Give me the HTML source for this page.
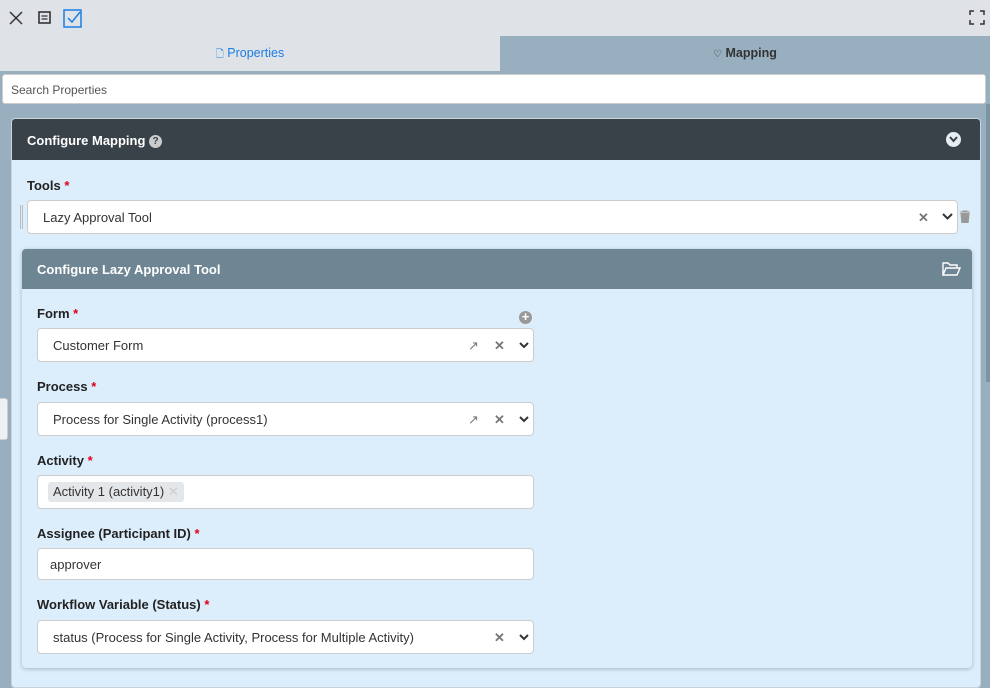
<!DOCTYPE html>
<html><head><style>
*{box-sizing:border-box;margin:0;padding:0}
body{width:990px;height:676px;overflow:hidden;background:#97afbf;font-family:"Liberation Sans",sans-serif;font-size:13px;color:#222;position:relative}
.abs{position:absolute}
.top{left:0;top:0;width:990px;height:36px;background:#dfe3e8}
.tabl{left:0;top:36px;width:500px;height:35px;background:#dfe3e8;color:#1a7ee6;text-align:center;line-height:34px;font-size:12.5px}
.tabr{left:500px;top:36px;width:490px;height:35px;background:#97afbf;color:#333;text-align:center;line-height:34px;font-size:12.5px;font-weight:bold}
.search{left:2px;top:74px;width:984px;height:30px;background:#fff;border:1px solid #ccc;border-radius:3px;padding-left:8px;line-height:30px;font-size:12px;color:#555}
.outer{left:11px;top:118px;width:970px;height:570px;background:#dceefc;border:1px solid #c9d3db;border-radius:4px;overflow:hidden}
.oh{height:41px;background:#394249;color:#fff;font-weight:bold;font-size:13px;padding-left:15px;line-height:43px;position:relative}
.lbl{font-weight:bold;font-size:13px;color:#222}
.req{color:#e0001a}
.sel{background:#fff;border:1px solid #ccc;border-radius:4px;height:34px;line-height:33px;padding-left:15px;font-size:13px;color:#333}
.inner{left:22px;top:249px;width:950px;height:419px;background:#dceefc;border-radius:4px;box-shadow:0 1px 4px rgba(0,0,0,.25);overflow:hidden}
.ih{height:40px;background:#6e8593;color:#fff;font-weight:bold;font-size:13px;padding-left:15px;line-height:42px;position:relative}
.ic{position:absolute;color:#777;font-size:13px}
</style></head><body>
<div class="abs top">
<svg class="abs" style="left:9px;top:11px" width="14" height="14"><path d="M1 1L13 13M13 1L1 13" stroke="#333" stroke-width="1.5"/></svg>
<svg class="abs" style="left:38px;top:11px" width="13" height="13"><rect x="1" y="1" width="11" height="11" fill="none" stroke="#333" stroke-width="1.6"/><path d="M3.5 5h6M3.5 8h6" stroke="#333" stroke-width="1.3"/></svg>
<svg class="abs" style="left:63px;top:9px" width="19" height="19"><rect x="1" y="1" width="17" height="17" fill="none" stroke="#1a7ee6" stroke-width="1.5"/><path d="M5 9l4 4 8-10" fill="none" stroke="#1a7ee6" stroke-width="1.5"/></svg>
<svg class="abs" style="left:969px;top:10px" width="16" height="15"><path d="M1 5V1h4M11 1h4v4M15 10v4h-4M5 14H1v-4" fill="none" stroke="#333" stroke-width="1.5"/></svg>
</div>
<div class="abs tabl"><span style="font-size:10px">&#128459;</span> Properties</div>
<div class="abs tabr"><span style="font-size:10px;font-weight:normal">&#9825;</span> Mapping</div>
<div class="abs search">Search Properties</div>
<div class="abs" style="left:986px;top:104px;width:4px;height:278px;background:#7b93a3"></div>
<div class="abs" style="left:0;top:398px;width:8px;height:42px;background:#eef1f3;border:1px solid #ccc;border-left:none;border-radius:0 3px 3px 0"></div>
<div class="abs outer">
<div class="oh">Configure Mapping <span style="display:inline-block;width:13px;height:13px;border-radius:50%;background:#ccc;color:#394249;font-size:10px;line-height:13px;text-align:center;vertical-align:1px">?</span>
<span style="position:absolute;left:934px;top:13px;width:15px;height:15px;border-radius:50%;background:#e8eef3"></span><svg style="position:absolute;left:937px;top:17px" width="9" height="7"><path d="M1 1l3.5 4 3.5-4" fill="none" stroke="#394249" stroke-width="2"/></svg></div>
<div class="lbl abs" style="left:15px;top:59px">Tools <span class="req">*</span></div>
<div class="abs" style="left:8px;top:86px;width:3px;height:24px;border-left:1px solid #bbb;border-right:1px solid #bbb"></div>
<div class="abs sel" style="left:15px;top:81px;width:931px">Lazy Approval Tool
<span class="ic" style="left:890px;top:0;font-weight:bold">&#10005;</span>
<svg style="position:absolute;left:914px;top:12px" width="11" height="8"><path d="M1 1l4.5 4.5L10 1" fill="none" stroke="#333" stroke-width="2"/></svg></div>
<svg class="abs" style="left:947px;top:91px" width="12" height="13"><path d="M1 2h10M4 2V1h4v1M2 3.5h8l-.8 9H2.8z" fill="#999" stroke="#999"/></svg>
</div>
<div class="abs inner">
<div class="ih">Configure Lazy Approval Tool
<svg style="position:absolute;left:920px;top:13px" width="19" height="14"><path d="M1 13V1h5l2 2h7v3M1 13l3-7h14l-3 7z" fill="none" stroke="#fff" stroke-width="1.4"/></svg></div>
<div class="lbl abs" style="left:15px;top:57px">Form <span class="req">*</span></div>
<div class="abs" style="left:497px;top:62px;width:13px;height:13px;border-radius:50%;background:#999;color:#fff;font-size:13px;line-height:12px;text-align:center;font-weight:bold">+</div>
<div class="abs sel" style="left:15px;top:79px;width:497px">Customer Form
<span class="ic" style="left:430px;top:0">&#8599;</span><span class="ic" style="left:456px;top:0;font-weight:bold">&#10005;</span>
<svg style="position:absolute;left:481px;top:13px" width="10" height="7"><path d="M1 1l4 4 4-4" fill="none" stroke="#333" stroke-width="2"/></svg></div>
<div class="lbl abs" style="left:15px;top:130px">Process <span class="req">*</span></div>
<div class="abs sel" style="left:15px;top:153px;width:497px">Process for Single Activity (process1)
<span class="ic" style="left:430px;top:0">&#8599;</span><span class="ic" style="left:456px;top:0;font-weight:bold">&#10005;</span>
<svg style="position:absolute;left:481px;top:13px" width="10" height="7"><path d="M1 1l4 4 4-4" fill="none" stroke="#333" stroke-width="2"/></svg></div>
<div class="lbl abs" style="left:15px;top:204px">Activity <span class="req">*</span></div>
<div class="abs sel" style="left:15px;top:226px;width:497px;padding-left:10px"><span style="display:inline-block;background:#e4e7ea;border-radius:3px;height:20px;line-height:20px;padding:0 5px;margin-top:6px;vertical-align:top">Activity 1 (activity1) <span style="color:#ccc">&#10005;</span></span></div>
<div class="lbl abs" style="left:15px;top:277px">Assignee (Participant ID) <span class="req">*</span></div>
<div class="abs sel" style="left:15px;top:299px;width:497px;height:32px;line-height:31px;padding-left:12px">approver</div>
<div class="lbl abs" style="left:15px;top:348px">Workflow Variable (Status) <span class="req">*</span></div>
<div class="abs sel" style="left:15px;top:371px;width:497px">status (Process for Single Activity, Process for Multiple Activity)
<span class="ic" style="left:456px;top:0;font-weight:bold">&#10005;</span>
<svg style="position:absolute;left:481px;top:13px" width="10" height="7"><path d="M1 1l4 4 4-4" fill="none" stroke="#333" stroke-width="2"/></svg></div>
</div>
</body></html>
